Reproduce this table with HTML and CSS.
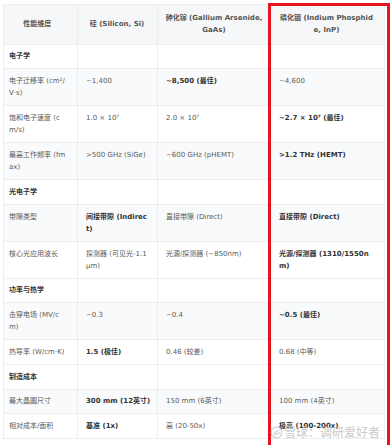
FILE: index.html
```html
<!DOCTYPE html>
<html lang="zh">
<head>
<meta charset="utf-8">
<link rel="stylesheet" href="styles.css">
</head>
<body>
<div class="page">
  <table class="cmp">
    <colgroup>
      <col class="c1"><col class="c2"><col class="c3"><col class="c4">
    </colgroup>
    <thead>
      <tr>
        <th>性能维度</th>
        <th>硅 (Silicon, Si)</th>
        <th>砷化镓 (Gallium Arsenide, GaAs)</th>
        <th>磷化铟 (Indium Phosphide, InP)</th>
      </tr>
    </thead>
    <tbody>
      <tr class="cat"><td>电子学</td><td></td><td></td><td></td></tr>
      <tr class="alt"><td>电子迁移率 (cm²/V·s)</td><td>~1,400</td><td><b>~8,500 (最佳)</b></td><td>~4,600</td></tr>
      <tr><td>饱和电子速度 (cm/s)</td><td>1.0 × 10⁷</td><td>2.0 × 10⁷</td><td><b>~2.7 × 10⁷ (最佳)</b></td></tr>
      <tr class="alt"><td>最高工作频率 (fmax)</td><td>&gt;500 GHz (SiGe)</td><td>~600 GHz (pHEMT)</td><td><b>&gt;1.2 THz (HEMT)</b></td></tr>
      <tr class="cat"><td>光电子学</td><td></td><td></td><td></td></tr>
      <tr class="alt"><td>带隙类型</td><td><b>间接带隙 (Indirect)</b></td><td>直接带隙 (Direct)</td><td><b>直接带隙 (Direct)</b></td></tr>
      <tr><td>核心光应用波长</td><td>探测器 (可见光-1.1μm)</td><td>光源/探测器 (~850nm)</td><td><b>光源/探测器 (1310/1550nm)</b></td></tr>
      <tr class="cat"><td>功率与热学</td><td></td><td></td><td></td></tr>
      <tr class="alt"><td>击穿电场 (MV/cm)</td><td>~0.3</td><td>~0.4</td><td><b>~0.5 (最佳)</b></td></tr>
      <tr><td>热导率 (W/cm·K)</td><td><b>1.5 (极佳)</b></td><td>0.46 (较差)</td><td>0.68 (中等)</td></tr>
      <tr class="cat"><td>制造成本</td><td></td><td></td><td></td></tr>
      <tr class="alt"><td>最大晶圆尺寸</td><td class="nowrap"><b>300 mm (12英寸)</b></td><td>150 mm (6英寸)</td><td>100 mm (4英寸)</td></tr>
      <tr><td>相对成本/面积</td><td><b>基准 (1x)</b></td><td>高 (20-50x)</td><td><b>极高 (100-200x)</b></td></tr>
    </tbody>
  </table>
  <div class="highlight"></div>
  <div class="watermark">
    <svg class="wm-logo" viewBox="0 0 16 16" width="13" height="13" aria-hidden="true">
      <circle cx="8" cy="8" r="6.6" fill="none" stroke="#cfcfcf" stroke-width="1.3"/>
      <path d="M4.5 10.5 C6 7.5 8 6 11.5 5.2" fill="none" stroke="#cfcfcf" stroke-width="1.3"/>
      <path d="M5.5 12.5 C7.5 9.5 9.5 8.5 12.8 8.3" fill="none" stroke="#cfcfcf" stroke-width="1.3"/>
    </svg>
    <span>雪球：调研爱好者</span>
  </div>
</div>
</body>
</html>
```

FILE: styles.css
```css
html, body {
  margin: 0;
  padding: 0;
  background: #ffffff;
}

.page {
  position: relative;
  width: 390px;
  height: 445px;
  overflow: hidden;
  padding: 4px 0 0 3px;
  box-sizing: border-box;
  font-family: "DejaVu Sans", "Noto Sans CJK SC", sans-serif;
}

.cmp {
  width: 381px;
  border-collapse: collapse;
  table-layout: fixed;
  font-size: 7px;
  line-height: 12.3px;
  color: #5a5a5a;
  border: 1px solid #eceef1;
}

.c1 { width: 74px; }
.c2 { width: 80px; }
.c3 { width: 111px; }
.c4 { width: 116px; }

.cmp th,
.cmp td {
  border: 1px solid #eceef1;
  padding-top: 5.7px;
  padding-bottom: 5.7px;
  word-break: break-all;
  text-align: left;
  vertical-align: top;
}

.cmp th:nth-child(1),
.cmp td:nth-child(1) { padding-left: 5px; padding-right: 11.6px; }
.cmp th:nth-child(2),
.cmp td:nth-child(2) { padding-left: 8px; padding-right: 9px; }
.cmp th:nth-child(3),
.cmp td:nth-child(3) { padding-left: 6px; padding-right: 4px; }
.cmp td:nth-child(3) { padding-left: 8px; padding-right: 2px; }
.cmp th:nth-child(4),
.cmp td:nth-child(4) { padding-left: 10px; padding-right: 10px; }

.cmp td.nowrap {
  white-space: nowrap;
}

.cmp th {
  background: #f6f7f9;
  font-weight: 700;
  color: #555;
  text-align: center;
  vertical-align: middle;
  padding-top: 7px;
  padding-bottom: 7px;
}

.cmp tr.alt td {
  background: #f9fafb;
}

.cmp tr.cat td {
  font-weight: 700;
  color: #333;
}

.cmp b {
  font-weight: 700;
  color: #333;
}

.highlight {
  position: absolute;
  left: 268px;
  top: 3px;
  width: 122px;
  height: 460px;
  border: 3px solid #e8141c;
  box-sizing: border-box;
}

.watermark {
  position: absolute;
  left: 270px;
  top: 425px;
  display: flex;
  align-items: center;
  gap: 1px;
  font-size: 12px;
  line-height: 14px;
  color: #cacaca;
  font-family: "Noto Sans CJK SC", sans-serif;
}

.wm-logo {
  display: block;
}
```
